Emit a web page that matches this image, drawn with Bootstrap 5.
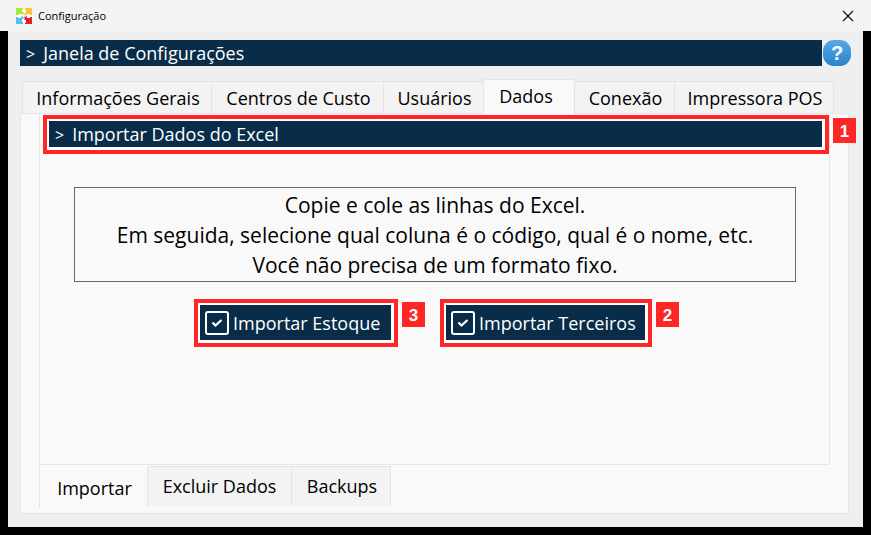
<!DOCTYPE html>
<html lang="pt-BR">
<head>
<meta charset="utf-8">
<meta name="viewport" content="width=device-width, initial-scale=1">
<title>Configuração</title>
<link href="https://cdn.jsdelivr.net/npm/bootstrap@5.3.0/dist/css/bootstrap.min.css" rel="stylesheet">
<style>
  :root { --navy: #092d49; --alert: #ff2626; --line: #e5e5e5; --pane: #f9f9f9; --tab: #f3f3f3; }
  body { background: #000; color: #000; font-family: "Open Sans", "Noto Sans", sans-serif; font-size: 18px; line-height: 26px; }
  .title-bar { background: #f3f3f3; height: 31px; padding: 0 16px; gap: 6px; }
  .title-bar h1 { font-size: 11px; line-height: 31px; }
  .close-btn { line-height: 0; }
  .window { background: #efefef; margin: 0 8px 8px; padding: 9px 14px 13px 12px; }
  .banner { background: var(--navy); color: #fff; font-size: 18px; line-height: 26px; height: 26px; padding-left: 6px; }
  .banner span { margin-right: 8px; font-size: 16px; }
  .heading-row { gap: 1px; margin-right: -2px; }
  .help-btn { width: 28px; height: 26px; border-radius: 11px; background: linear-gradient(#54a9ea, #2a82cb); color: #fff; font: bold 20px/26px "Liberation Sans", sans-serif; }
  .top-tabs { display: grid; grid-template-columns: 189fr 172fr 100fr 91fr 100fr 160fr; align-items: end; margin: 13px 15px -1px 2px; position: relative; }
  .tab-btn { background: var(--tab); border: 1px solid var(--line); border-right-width: 0; height: 33px; padding: 0 0 0 2px; color: #000; white-space: nowrap; }
  .tab-btn:last-child { border-right-width: 1px; }
  .top-tabs .active { background: var(--pane); border-bottom-color: var(--pane); height: 35px; padding: 0 6px 2px 0; }
  .outer-pane { background: var(--pane); border: 1px solid var(--line); padding: 0 18px 5px; }
  .inner-pane { border: 1px solid var(--line); border-top: 0; padding: 1px 0 117px 3px; }
  .marked { border: 4px solid var(--alert); background: #fff; padding: 2px; position: relative; }
  .marked-banner { padding-right: 3px; padding-bottom: 3px; }
  .step { position: absolute; top: -1px; left: calc(100% + 8px); width: 23px; height: 25px; background: var(--alert); color: #fff; font: bold 17px/27px "Liberation Sans", sans-serif; text-align: center; }
  .notice { border: 1px solid #666; margin: 33px 33px 17px 31px; padding: 2px 0 1px; font-size: 21px; line-height: 30px; text-align: center; }
  .actions { gap: 42px; padding-left: 151px; }
  .actions .marked { padding: 2px 3px 3px 2px; flex: 0 0 204px; }
  .actions .marked:last-child { flex-basis: 212px; }
  .action-btn { width: 100%; height: 35px; background: var(--navy); color: #fff; padding: 0 0 0 5px; gap: 4px; white-space: nowrap; }
  .bottom-tabs .tab-btn { height: 40px; margin-top: 1px; border-bottom: 0; flex: 0 0 100px; padding-bottom: 2px; }
  .bottom-tabs .tab-btn:nth-child(2) { flex-basis: 144px; padding-left: 0; }
  .bottom-tabs .active { background: var(--pane); height: 44px; margin-top: -1px; flex-basis: 108px; padding: 3px 0 0 2px; }
</style>
<script src="https://cdn.jsdelivr.net/npm/bootstrap@5.3.0/dist/js/bootstrap.bundle.min.js"></script>
</head>
<body>
<header class="title-bar d-flex align-items-center">
  <svg width="16" height="16" viewBox="0 0 16 16" aria-hidden="true">
    <path fill="#fff" d="M1 1h14v14H1z"/>
    <path fill="#a6ea33" d="M0 0h7v1.500H6v2.500h1.500V7H6V6H3v1H0z"/>
    <path fill="#ffc234" d="M9 0h7v7h-2V6h-3v1.500H8.500V5H10V2H9z"/>
    <path fill="#56c0ea" d="M0 9h2v1h3V8.500h2.500V11H6v3h1v2H0z"/>
    <path fill="#df2027" d="M8.500 8.500H11V10h3V9h2v7H9v-1h1v-3H8.500z"/>
  </svg>
  <h1 class="m-0 fw-normal">Configuração</h1>
  <button type="button" class="close-btn btn p-0 border-0 ms-auto" aria-label="Fechar">
    <svg width="14" height="12" viewBox="0 0 14 12" fill="none" stroke="#111" stroke-width="1.2"><path d="M2 1l10 10M12 1L2 11"/></svg>
  </button>
</header>
<main class="window">
  <div class="heading-row d-flex">
    <h2 class="banner flex-grow-1 m-0 fw-normal"><span>&gt;</span>Janela de Configurações</h2>
    <button type="button" class="help-btn border-0 p-0" aria-label="Ajuda">?</button>
  </div>
  <nav class="top-tabs" role="tablist" aria-label="Configurações">
    <button type="button" role="tab" class="tab-btn">Informações Gerais</button>
    <button type="button" role="tab" class="tab-btn">Centros de Custo</button>
    <button type="button" role="tab" class="tab-btn">Usuários</button>
    <button type="button" role="tab" class="tab-btn active" aria-selected="true">Dados</button>
    <button type="button" role="tab" class="tab-btn">Conexão</button>
    <button type="button" role="tab" class="tab-btn">Impressora POS</button>
  </nav>
  <section class="outer-pane">
    <div class="inner-pane">
      <div class="marked marked-banner">
        <h3 class="banner m-0 fw-normal"><span>&gt;</span>Importar Dados do Excel</h3>
        <span class="step">1</span>
      </div>
      <p class="notice">Copie e cole as linhas do Excel.<br>Em seguida, selecione qual coluna é o código, qual é o nome, etc.<br>Você não precisa de um formato fixo.</p>
      <div class="actions d-flex">
        <div class="marked">
          <button type="button" class="action-btn border-0 d-flex align-items-center">
            <svg width="24" height="24" viewBox="0 0 24 24" fill="none" stroke="#fff" aria-hidden="true"><rect x="1" y="1" width="22" height="22" rx="2" stroke-width="2"/><path d="M7.500 11.500l3 3 6-5.500" stroke-width="2.300"/></svg>
            Importar Estoque
          </button>
          <span class="step">3</span>
        </div>
        <div class="marked">
          <button type="button" class="action-btn border-0 d-flex align-items-center">
            <svg width="24" height="24" viewBox="0 0 24 24" fill="none" stroke="#fff" aria-hidden="true"><rect x="1" y="1" width="22" height="22" rx="2" stroke-width="2"/><path d="M7.500 11.500l3 3 6-5.500" stroke-width="2.300"/></svg>
            Importar Terceiros
          </button>
          <span class="step">2</span>
        </div>
      </div>
    </div>
    <nav class="bottom-tabs d-flex align-items-start" role="tablist" aria-label="Dados">
      <button type="button" role="tab" class="tab-btn active" aria-selected="true">Importar</button>
      <button type="button" role="tab" class="tab-btn">Excluir Dados</button>
      <button type="button" role="tab" class="tab-btn">Backups</button>
    </nav>
  </section>
</main>
</body>
</html>
